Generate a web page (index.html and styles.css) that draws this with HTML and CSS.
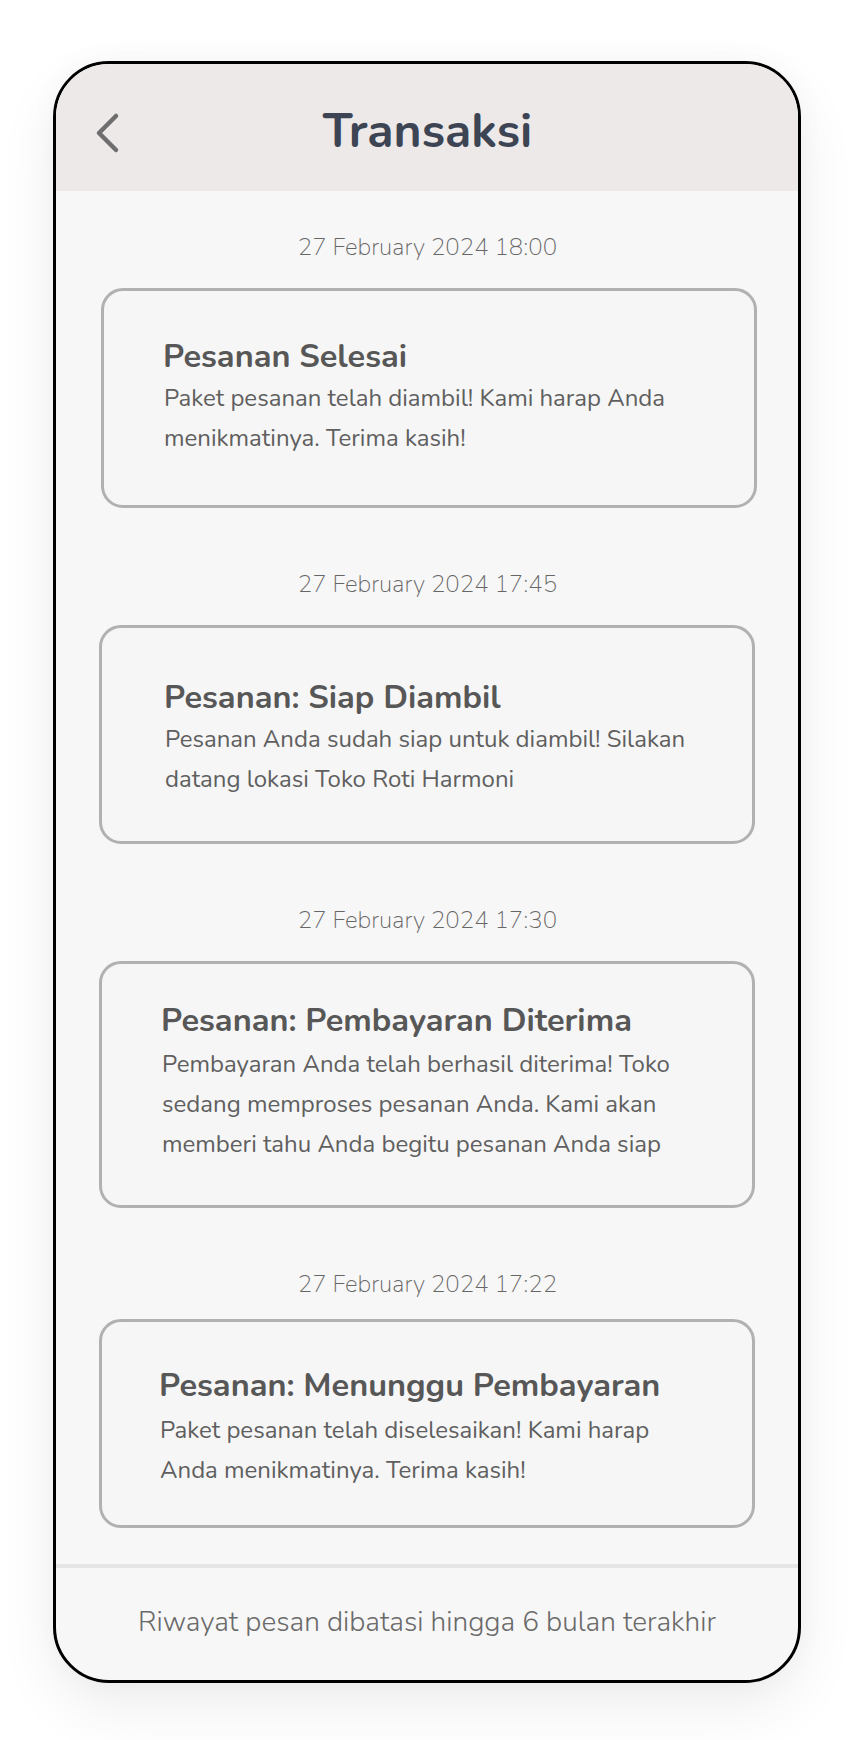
FILE: index.html
```html
<!DOCTYPE html>
<html lang="id">
<head>
<meta charset="utf-8">
<title>Transaksi</title>
<link rel="stylesheet" href="styles.css">
</head>
<body>
<div class="phone">
  <header class="topbar">
    <div class="topbar-left">
      <svg class="back" width="26" height="42" viewBox="0 0 26 42" aria-hidden="true">
        <polyline points="21,4 4,21 21,38" fill="none" stroke="#6e6e6e" stroke-width="4.5" stroke-linecap="round" stroke-linejoin="round"/>
      </svg>
    </div>
    <h1 class="topbar-title">Transaksi</h1>
    <div class="topbar-right"></div>
  </header>

  <main class="feed">
    <section class="entry entry--1">
      <p class="date">27 February 2024 18:00</p>
      <article class="card card--1">
        <h2 class="card-title">Pesanan Selesai</h2>
        <p class="card-text">Paket pesanan telah diambil! Kami harap Anda menikmatinya. Terima kasih!</p>
      </article>
    </section>

    <section class="entry entry--2">
      <p class="date">27 February 2024 17:45</p>
      <article class="card card--2">
        <h2 class="card-title">Pesanan: Siap Diambil</h2>
        <p class="card-text">Pesanan Anda sudah siap untuk diambil! Silakan datang lokasi Toko Roti Harmoni</p>
      </article>
    </section>

    <section class="entry entry--3">
      <p class="date">27 February 2024 17:30</p>
      <article class="card card--3">
        <h2 class="card-title">Pesanan: Pembayaran Diterima</h2>
        <p class="card-text">Pembayaran Anda telah berhasil diterima! Toko sedang memproses pesanan Anda. Kami akan memberi tahu Anda begitu pesanan Anda siap</p>
      </article>
    </section>

    <section class="entry entry--4">
      <p class="date">27 February 2024 17:22</p>
      <article class="card card--4">
        <h2 class="card-title">Pesanan: Menunggu Pembayaran</h2>
        <p class="card-text">Paket pesanan telah diselesaikan! Kami harap Anda menikmatinya. Terima kasih!</p>
      </article>
    </section>
  </main>

  <footer class="footer">
    <p class="footer-text">Riwayat pesan dibatasi hingga 6 bulan terakhir</p>
  </footer>
</div>
</body>
</html>
```

FILE: styles.css
```css
* { box-sizing: border-box; }

html, body {
  margin: 0;
  padding: 0;
  background: #ffffff;
}

body {
  font-family: "Nunito", "Lato", "Noto Sans", sans-serif;
  padding: 61px 0 0 53px;
  height: 1740px;
  overflow: hidden;
}

p, h1, h2 { margin: 0; }

.phone {
  width: 748px;
  height: 1622px;
  border: 3px solid #000;
  border-radius: 56px;
  overflow: hidden;
  background: #f7f7f7;
  display: flex;
  flex-direction: column;
  box-shadow: 0 24px 60px rgba(0, 0, 0, 0.07), 0 0 30px rgba(0, 0, 0, 0.03);
}

.topbar {
  height: 127px;
  background: #ece9e8;
  display: grid;
  grid-template-columns: 1fr auto 1fr;
  align-items: center;
  flex-shrink: 0;
}

.topbar-left {
  padding-left: 39px;
  display: flex;
  align-items: center;
  padding-top: 11px;
}

.back { display: block; }

.topbar-title {
  font-size: 48px;
  font-weight: 700;
  color: #3d4453;
  line-height: 1;
  padding-top: 6px;
  margin-left: 1px;
}

.feed {
  flex: 1;
  padding: 41px 42px 0 43px;
}

.date {
  font-size: 24px;
  line-height: 30px;
  font-weight: 200;
  color: #666666;
  text-align: center;
  margin-bottom: 26px;
}

.entry + .entry { margin-top: 61px; }
.entry--4 .date { margin-bottom: 20px; }

.card {
  width: 656px;
  border: 3px solid #b1b1b1;
  border-radius: 22px;
  background: #f6f6f6;
}

.card--1 { padding: 45px 60px 47px 59px; margin-left: 2px; }
.card--2 { padding: 49px 60px 42px 62px; }
.card--3 { padding: 36px 60px 41px 59px; }
.card--4 { padding: 43px 60px 35px 57px; }

.card-title {
  font-size: 32.5px;
  line-height: 40px;
  font-weight: 700;
  color: #575757;
}

.card-text {
  font-size: 24px;
  line-height: 40px;
  font-weight: 400;
  color: #5f5f5f;
  margin-top: 2px;
  padding-left: 1px;
}

.card--3 .card-text { margin-top: 4px; }
.card--4 .card-text { margin-top: 5px; }

.footer {
  flex-shrink: 0;
  height: 116px;
  border-top: 4px solid #e5e5e5;
  display: flex;
  align-items: center;
  justify-content: center;
}

.footer-text {
  font-size: 28px;
  font-weight: 300;
  color: #6a6a6a;
  line-height: 34px;
  margin-top: -4px;
}
```
